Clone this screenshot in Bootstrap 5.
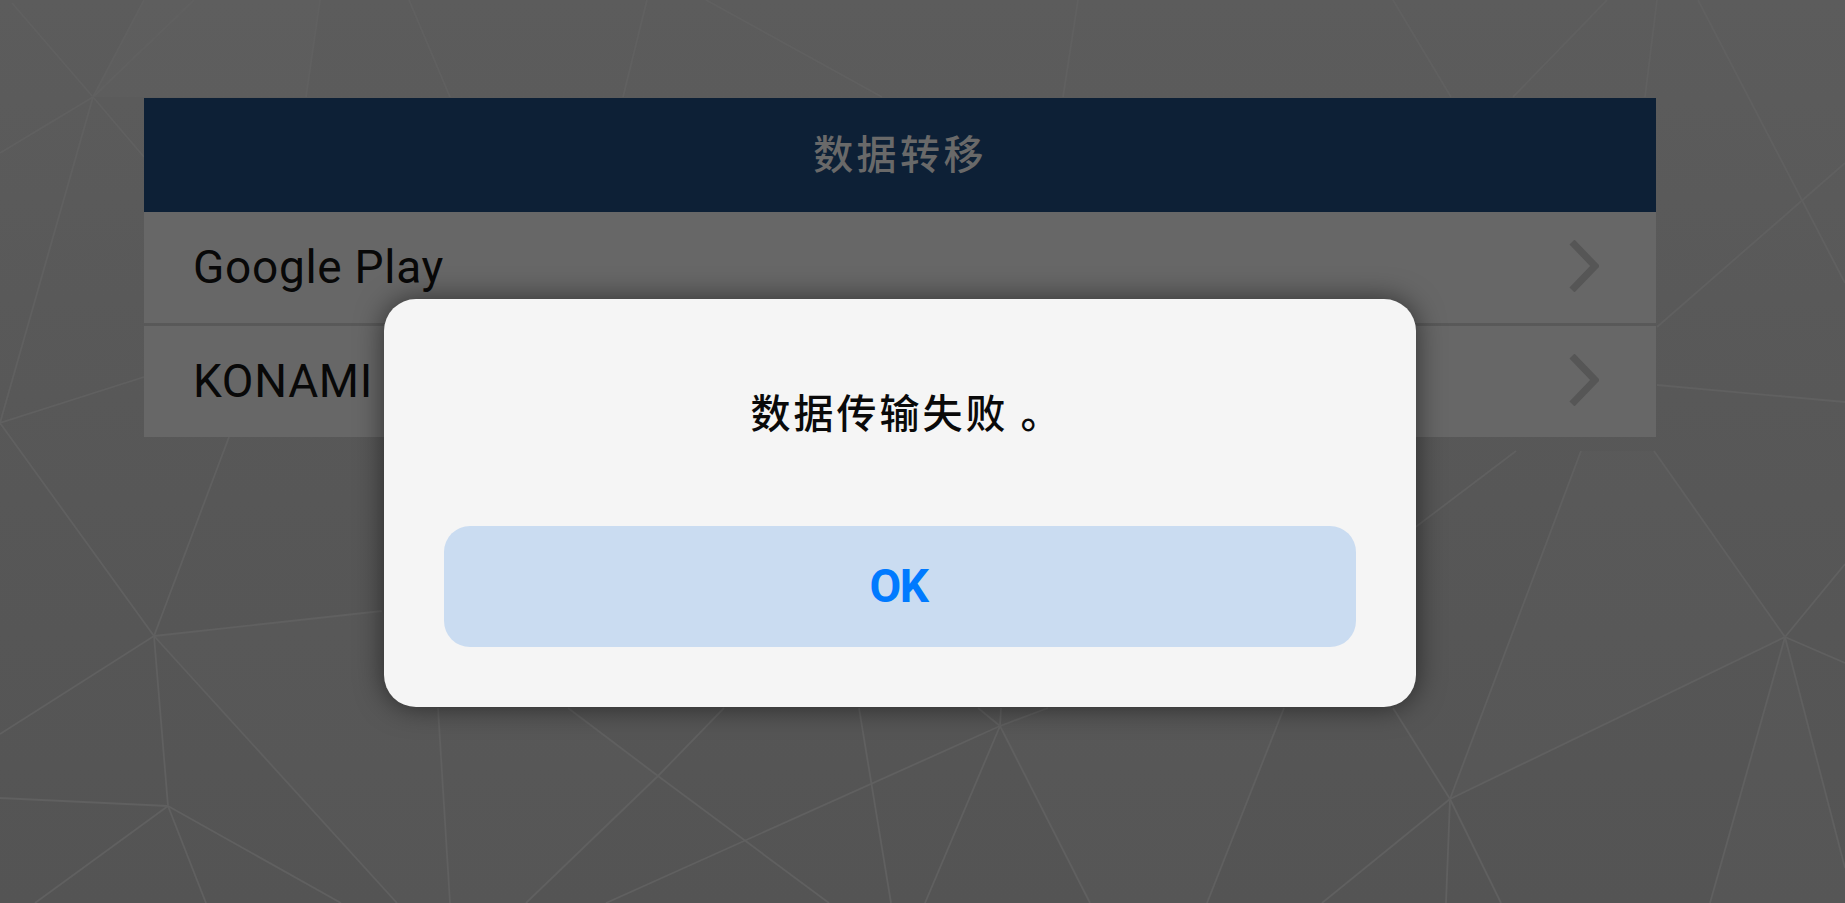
<!DOCTYPE html>
<html lang="zh">
<head>
<meta charset="utf-8">
<title>数据转移</title>
<link href="https://cdn.jsdelivr.net/npm/bootstrap@5.3.0/dist/css/bootstrap.min.css" rel="stylesheet">
<style>
html,body{height:100%}
body{background:linear-gradient(180deg,#5c5c5c 0%,#575757 55%,#545454 100%);overflow:hidden;font-family:Roboto,"Noto Sans CJK SC",sans-serif;padding:98px 189px 0 144px}
.tri-bg{inset:0;width:100%;height:100%;filter:blur(.6px)}
.tri-bg line{stroke:#606060;stroke-width:1.8}
.tri-bg polygon{fill:rgba(255,255,255,.016)}
.xfer-panel{z-index:1}
.xfer-head{height:114px;background:#0d2036;color:#696969;font-size:40px;font-weight:500;letter-spacing:3.4px;line-height:1;padding-bottom:6px;font-family:"Noto Sans CJK SC",sans-serif}
.xfer-row{height:111px;background:#676767;color:#080808;font-size:46px;letter-spacing:.7px;padding:0 57px 0 49px;margin-bottom:3px}
.xfer-row:last-child{margin-bottom:0}
.chev{width:30px;height:52px;margin-top:-3px}
.chev path{fill:none;stroke:#565656;stroke-width:7}
.dlg{z-index:2;left:384px;top:299px;width:1032px;height:408px;background:#f5f5f5;border-radius:32px;box-shadow:0 0 28px rgba(0,0,0,.55);padding:0 60px 60px}
.dlg-msg{font-family:"Noto Sans CJK SC",sans-serif;font-size:40px;font-weight:500;letter-spacing:3px;color:#0a0a0a;line-height:58px;padding:83px 0 0 14px}
.dlg-ok{height:121px;background:#cadcf1;border-radius:26px;color:#007aff;font-size:46px;font-weight:700;letter-spacing:-1.5px;padding:0 3px 0 0;border:0;width:100%}
.dlg-ok:hover,.dlg-ok:active{background:#cadcf1!important;color:#007aff!important}
</style>
</head>
<body class="position-relative">
<svg class="tri-bg position-absolute top-0 start-0" viewBox="0 0 1845 903" aria-hidden="true">
<polygon points="93,97 144,0 320,0 306,97"/>
<polygon points="154,636 382,611 438,708 450,903 397,903"/>
<polygon points="568,708 658,776 526,903 450,903 438,708"/>
<polygon points="1000,726 1048,708 1284,708 1207,903 1090,903"/>
<polygon points="1450,799 1581,451 1654,451 1785,637"/>
<polygon points="1785,637 1845,868 1845,903 1710,903"/>
<line x1="12" y1="3" x2="93" y2="97"/><line x1="93" y1="97" x2="194" y2="0"/><line x1="93" y1="97" x2="144" y2="0"/><line x1="93" y1="97" x2="0" y2="153"/><line x1="93" y1="97" x2="0" y2="423"/><line x1="93" y1="97" x2="144" y2="157"/>
<line x1="320" y1="0" x2="306" y2="97"/><line x1="409" y1="0" x2="450" y2="97"/><line x1="647" y1="0" x2="623" y2="97"/><line x1="706" y1="0" x2="882" y2="97"/>
<line x1="1078" y1="0" x2="1063" y2="97"/><line x1="1393" y1="0" x2="1451" y2="97"/><line x1="1607" y1="0" x2="1513" y2="97"/><line x1="1657" y1="0" x2="1645" y2="97"/><line x1="1698" y1="0" x2="1845" y2="283"/><line x1="1845" y1="163" x2="1657" y2="327"/><line x1="1657" y1="385" x2="1845" y2="402"/>
<line x1="144" y1="377" x2="0" y2="423"/><line x1="0" y1="423" x2="154" y2="636"/><line x1="229" y1="437" x2="154" y2="636"/>
<line x1="154" y1="636" x2="382" y2="611"/><line x1="154" y1="636" x2="0" y2="734"/><line x1="154" y1="636" x2="168" y2="806"/><line x1="154" y1="636" x2="397" y2="903"/>
<line x1="168" y1="806" x2="0" y2="798"/><line x1="168" y1="806" x2="35" y2="903"/><line x1="168" y1="806" x2="206" y2="903"/><line x1="168" y1="806" x2="341" y2="903"/>
<line x1="438" y1="708" x2="450" y2="903"/><line x1="568" y1="708" x2="658" y2="776"/><line x1="658" y1="776" x2="829" y2="903"/><line x1="658" y1="776" x2="724" y2="708"/><line x1="658" y1="776" x2="526" y2="903"/><line x1="859" y1="708" x2="891" y2="903"/><line x1="606" y1="903" x2="1000" y2="726"/>
<line x1="1000" y1="726" x2="978" y2="708"/><line x1="1000" y1="726" x2="1001" y2="708"/><line x1="1000" y1="726" x2="1048" y2="708"/><line x1="1000" y1="726" x2="925" y2="903"/><line x1="1000" y1="726" x2="1090" y2="903"/><line x1="1284" y1="708" x2="1207" y2="903"/>
<line x1="1450" y1="799" x2="1393" y2="708"/><line x1="1450" y1="799" x2="1581" y2="451"/><line x1="1450" y1="799" x2="1785" y2="637"/><line x1="1450" y1="799" x2="1322" y2="903"/><line x1="1450" y1="799" x2="1446" y2="903"/><line x1="1450" y1="799" x2="1501" y2="903"/>
<line x1="1785" y1="637" x2="1654" y2="451"/><line x1="1785" y1="637" x2="1845" y2="564"/><line x1="1785" y1="637" x2="1845" y2="663"/><line x1="1785" y1="637" x2="1710" y2="903"/><line x1="1785" y1="637" x2="1845" y2="868"/><line x1="1413" y1="529" x2="1516" y2="451"/>
</svg>

<main class="xfer-panel position-relative">
  <header class="xfer-head d-flex align-items-center justify-content-center">数据转移</header>
  <div class="xfer-row d-flex align-items-center justify-content-between">
    <span>Google Play</span>
    <svg class="chev" viewBox="0 0 30 52"><path d="M3 2 L26 26 L3 50"/></svg>
  </div>
  <div class="xfer-row d-flex align-items-center justify-content-between">
    <span>KONAMI ID</span>
    <svg class="chev" viewBox="0 0 30 52"><path d="M3 2 L26 26 L3 50"/></svg>
  </div>
</main>

<div class="dlg position-absolute d-flex flex-column justify-content-between" role="dialog">
  <p class="dlg-msg text-center mb-0">数据传输失败 。</p>
  <button type="button" class="btn dlg-ok d-flex align-items-center justify-content-center">OK</button>
</div>
<script src="https://cdn.jsdelivr.net/npm/bootstrap@5.3.0/dist/js/bootstrap.bundle.min.js"></script>
</body>
</html>
